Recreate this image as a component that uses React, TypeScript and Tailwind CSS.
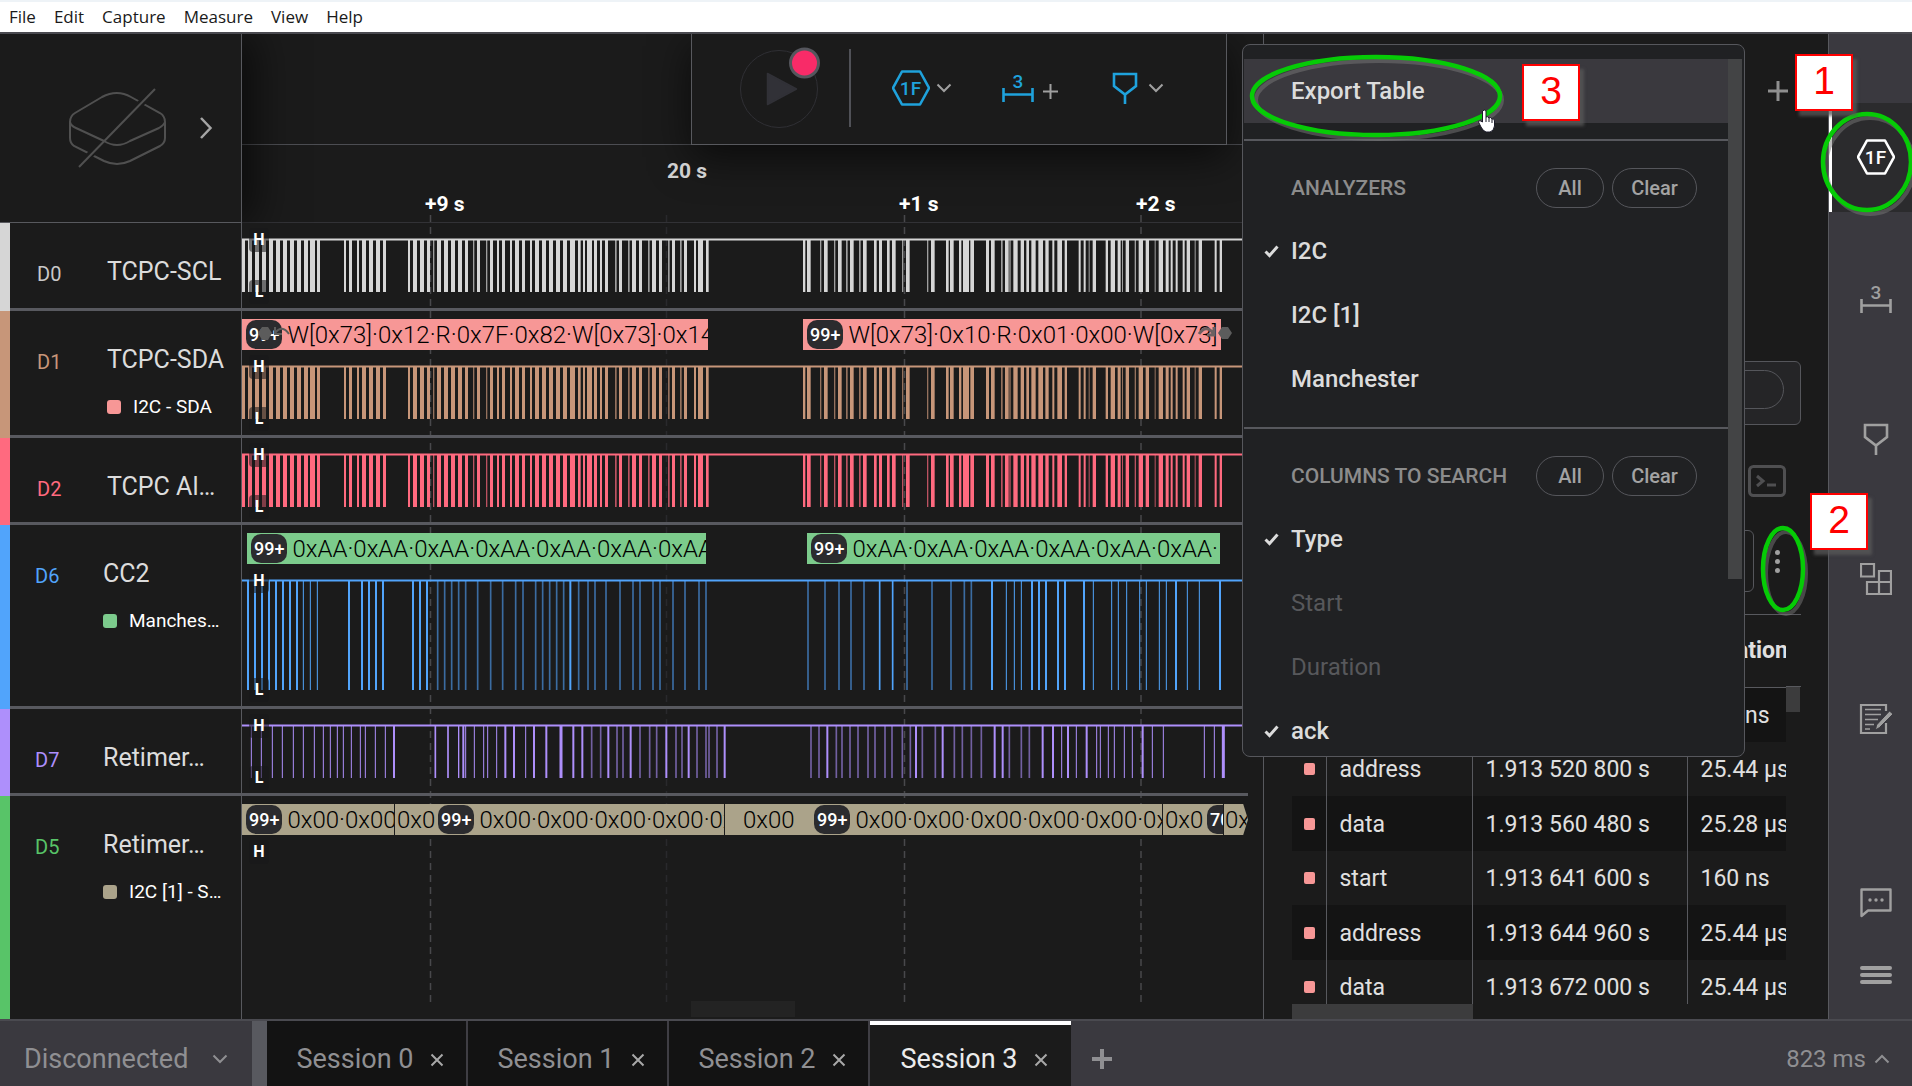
import React from "react";

type Pulse = [center: number, width: number, opacity?: number];

const fromSpans = (offset: number, spans: string): Pulse[] =>
  spans.split(" ").map((s) => {
    const [x, w] = s.split(",").map(Number);
    return [offset + (x + w / 2) / 3, w / 3, w < 6 ? 0.7 : 1];
  });

const fromCenters = (offset: number, marks: string): Pulse[] =>
  marks.split(" ").map((s) => {
    const dim = s.endsWith("d");
    const [x, w] = s.replace("d", "").split(",").map(Number);
    return [offset + x / 3, (w || (dim ? 5 : 3)) / 3, dim ? 0.6 : 1];
  });

const CLOCK: Pulse[] = [
  ...fromSpans(
    -2,
    "6,9 24,12 45,12 66,12 87,12 108,12 129,12 150,12 171,12 192,12 210,15 231,9 312,6 327,9 351,6 366,12 387,12 408,12 429,9 504,6 519,12 540,12 561,9 579,4 591,12 612,12 633,12 654,12 675,9 699,4 711,9 738,4 750,9 771,6 786,9 810,6 825,12 846,9 870,6 885,12 906,12 927,12 948,12 969,12 990,15 1014,8 1029,6 1041,15 1062,9 1080,6 1095,9 1125,5 1137,9 1164,5 1176,12 1197,9 1224,5 1236,12 1257,9 1284,5 1296,9 1320,5 1332,9 1362,6 1374,15 1398,8"
  ),
  ...fromSpans(
    498,
    "189,7 201,11 240,4 252,11 282,4 294,11 318,5 330,11 357,5 369,11 402,8 417,9 441,8 456,11 486,4 498,11 561,4 573,11 618,8 630,11 657,7 669,18 691,11 738,9 753,11 783,5 795,11 808,4 820,13 842,10 859,8 874,13 895,14 916,10 937,6 952,14 974,7 1016,6 1031,6 1046,3 1058,10 1097,7 1112,13 1133,9 1146,3 1157,10 1184,4 1196,13 1217,10 1244,3 1256,13 1277,9 1292,6 1307,6 1328,6 1340,10 1364,3 1376,10 1424,6 1439,7"
  ),
];

const CC: Pulse[] = [
  ...fromCenters(
    -2,
    "24,6 45,6 66,6 87,6 108,6 129,6 150,6 171,6 190 211 232 327,6 366,6 387,6 408,6 429,6 519,6 540,6 561,6 593d 614d 635d 656d 677d 713d 752d 788d 827d 849d 887d 908d 929d 950d 971d 991,6 1016d 1044d 1065d 1098d 1140d 1179d 1200d 1239d 1260d 1299d 1335d 1377d 1398d"
  ),
  ...fromCenters(
    498,
    "204d 255d 297d 333d 372d 419,5 458,5 501d 576d 633d 673d 694d 756,6 799 823 844 876,6 897,6 918,6 954,6 975,6 1032,6 1060 1115 1135 1160 1199 1219 1258 1279 1308,6 1342 1378 1440,6"
  ),
];

const RETIMER: Pulse[] = [
  ...fromCenters(
    -2,
    "34 64 97 127 160 190 223 250 271 292 310 334 361 376 406 436 462,6 586,5 624,5 656,4 670,6 677 703 731 743 770 796,6 822,6 857 882,6 919,6 963,9 1000,6 1027,6 1055d 1082d 1105,6 1131d 1149d 1172,6 1200d 1229d 1250d 1279,6 1308d 1326d 1346,6 1371d 1398d 1407d 1431d 1454,6"
  ),
  ...fromCenters(
    498,
    "213d 237d 262,6 289d 306d 330d 354d 384d 405d 435d 456d 487d 511d 528,6 547d 586d 608,6 643d 667d 694d 724d 764,6 788,6 808d 844d 868d 908,6 939,6 965 984,6 1009 1040,6 1070 1081 1105 1123 1153 1177 1208,6 1237 1270 1393 1423 1450,9"
  ),
];

function Wave({ pulses, color, bottom }: { pulses: Pulse[]; color: string; bottom: number }) {
  return (
    <svg width="100%" height={bottom + 1} className="block" aria-hidden="true">
      <rect x="0" y="15" width="100%" height="3" fill={color} opacity="0.5" />
      <rect x="0" y="16" width="100%" height="1" fill={color} />
      {pulses.map(([x, w, o], i) => (
        <rect key={i} x={x - w / 2} y="17" width={w} height={bottom - 17} fill={color} opacity={o} />
      ))}
    </svg>
  );
}

function Level({ children, className }: { children: string; className: string }) {
  return (
    <span
      className={`absolute left-[7px] flex h-6 w-5 items-center justify-center rounded bg-[#17171a]/55 text-base font-bold text-white ${className}`}
    >
      {children}
    </span>
  );
}

function Badge({ children }: { children: string }) {
  return (
    <span className="flex h-[29px] shrink-0 items-center justify-center rounded-[10px] bg-[#2b2b2e] px-[3px] text-lg font-medium text-white">
      {children}
    </span>
  );
}

function Bubble({ className, badge, children }: { className: string; badge?: string; children?: string }) {
  return (
    <div
      className={`flex h-[31px] shrink-0 items-center gap-[5px] overflow-hidden whitespace-nowrap text-2xl font-light text-black ${className}`}
    >
      {badge && <Badge>{badge}</Badge>}
      {children && <span>{children}</span>}
    </div>
  );
}

function Channel(props: {
  id: string;
  name: string;
  strip: string;
  idColor: string;
  height: string;
  sub?: string;
  subColor?: string;
  narrow?: boolean;
  bubbles?: React.ReactNode;
  wave?: React.ReactNode;
}) {
  const { id, name, strip, idColor, height, sub, subColor, narrow, bubbles, wave } = props;
  return (
    <section className={`flex ${height}`}>
      <div className="flex w-[242px] shrink-0 border-r border-[#58595e]">
        <div className={`w-[10px] shrink-0 ${strip}`} />
        <div className={`min-w-0 flex-1 pt-8 ${narrow ? "pl-[25px]" : "pl-[27px]"} border-b-[3px] border-[#58595f]`}>
          <div className="flex items-center">
            <span className={`shrink-0 pt-[5px] text-xl ${idColor} ${narrow ? "w-[68px]" : "w-[70px]"}`}>{id}</span>
            <span className="text-[25px] leading-8 whitespace-nowrap text-[#dcdcdc]">{name}</span>
          </div>
          {sub && (
            <div className={`flex items-center gap-3 pt-[17px] ${narrow ? "pl-[68px]" : "pl-[70px]"}`}>
              <span className={`size-[14px] shrink-0 rounded-[3px] ${subColor}`} />
              <span className="text-[19px] leading-7 whitespace-nowrap text-white">{sub}</span>
            </div>
          )}
        </div>
      </div>
      <div className="relative min-w-0 flex-1 overflow-hidden border-b-[3px] border-[#58595f]">
        {bubbles && <div className="relative flex pt-2">{bubbles}</div>}
        <div className="relative">{wave}</div>
      </div>
    </section>
  );
}

function Hexagon({ className }: { className?: string }) {
  return (
    <svg width="38" height="36" viewBox="0 0 38 36" className={className} aria-hidden="true">
      <path d="M10 1.500H28L37 18L28 34.500H10L1 18Z" fill="none" stroke="currentColor" strokeWidth="2.600" strokeLinejoin="round" />
      <text x="18.500" y="24.500" textAnchor="middle" fontFamily="Roboto" fontWeight="500" fontSize="19" fill="currentColor">
        1F
      </text>
    </svg>
  );
}

function Ruler() {
  return (
    <svg width="32" height="30" viewBox="0 0 32 30" aria-hidden="true">
      <text x="16" y="14.500" textAnchor="middle" fontFamily="Roboto" fontWeight="500" fontSize="19" fill="currentColor">
        3
      </text>
      <path d="M1.500 15V29M30.500 15V29M1.500 21.500H30.500" fill="none" stroke="currentColor" strokeWidth="2.600" />
    </svg>
  );
}

function Marker() {
  return (
    <svg width="26" height="32" viewBox="0 0 26 32" aria-hidden="true">
      <path d="M2 2H24V14L13 22.500L2 14ZM13 22V32" fill="none" stroke="currentColor" strokeWidth="2.600" />
    </svg>
  );
}

function Chevron({ className = "" }: { className?: string }) {
  return (
    <svg width="16" height="10" viewBox="0 0 16 10" className={className} aria-hidden="true">
      <path d="M1.500 1.500L8 8L14.500 1.500" fill="none" stroke="currentColor" strokeWidth="2" />
    </svg>
  );
}

function Plus({ size, weight }: { size: number; weight: number }) {
  return (
    <svg width={size} height={size} viewBox="0 0 20 20" aria-hidden="true">
      <path d="M10 0V20M0 10H20" stroke="currentColor" strokeWidth={(weight * 20) / size} />
    </svg>
  );
}

function Toolbar() {
  return (
    <div className="absolute top-0 left-[449px] z-10 flex h-[111px] w-[536px] items-center border border-t-0 border-[#58595e] bg-[#1b1b1b] pb-[2px] shadow-[0_12px_40px_rgba(0,0,0,0.6)]">
      <button aria-label="Start capture" className="ml-[47px] shrink-0 pb-[3px]">
        <svg width="82" height="84" viewBox="0 0 82 84" className="block">
          <circle cx="40" cy="44" r="38.500" fill="none" stroke="#2f2f34" />
          <path d="M28.500 28.500L57.500 44L28.500 59.500Z" fill="#313137" stroke="#313137" strokeWidth="1.500" strokeLinejoin="round" />
          <circle cx="65.500" cy="18" r="14" fill="#f82b68" stroke="#55565d" strokeWidth="3" />
        </svg>
      </button>
      <div className="ml-7 h-[78px] w-[2px] bg-[#505157]" />
      <button aria-label="Analyzers" className="ml-[41px] flex items-center gap-[6px] text-[#1fa2dc]">
        <Hexagon />
        <span className="text-[#a0a0a0]"><Chevron /></span>
      </button>
      <button aria-label="Measurements" className="ml-[50px] flex items-end gap-[9px] text-[#1fa2dc]">
        <Ruler />
        <span className="pb-1 text-[#a0a0a0]"><Plus size={15} weight={2} /></span>
      </button>
      <button aria-label="Markers" className="ml-[54px] flex items-center gap-[10px] text-[#1fa2dc]">
        <Marker />
        <span className="text-[#a0a0a0]"><Chevron /></span>
      </button>
    </div>
  );
}

function DeviceHeader() {
  return (
    <div className="relative z-10 flex w-[242px] shrink-0 items-center border-r border-b border-[#58595e] bg-[#1b1b1b] shadow-[12px_0_40px_rgba(0,0,0,0.6)]">
      <svg width="98" height="80" viewBox="0 0 98 80" className="ml-[68px] shrink-0" aria-label="No device" role="img">
        <g fill="none" stroke="#505050" strokeWidth="2">
          <path d="M34 9Q49 1 63 9L92 25Q97 28 97 34V50Q97 55 92 58L62 73Q49 79 36 73L6 58Q2 55 2 50V34Q2 28 7 25Z" />
          <path d="M2 34Q3 38 8 40L36 53Q49 61 62 53L91 40Q96 37 97 34" />
          <path d="M20 69L80 8" stroke="#1b1b1b" strokeWidth="7" strokeDasharray="16 52 20" />
          <path d="M11 79L87 1" />
        </g>
      </svg>
      <svg width="14" height="24" viewBox="0 0 14 24" className="ml-[33px]" aria-hidden="true">
        <path d="M2 2L11.500 12L2 22" fill="none" stroke="#a5a5a5" strokeWidth="2.500" />
      </svg>
    </div>
  );
}

function MenuOption({ label, on, dim }: { label: string; on?: boolean; dim?: boolean }) {
  return (
    <button
      role="menuitemcheckbox"
      aria-checked={!!on}
      className={`flex h-16 shrink-0 items-center text-2xl ${dim ? "text-[#57585b]" : "font-medium text-[#dcdcdc]"}`}
    >
      <span className="flex w-[47px] justify-end pr-3">
        {on && (
          <svg width="15" height="13" viewBox="0 0 15 13" aria-hidden="true">
            <path d="M1.500 6.500L5.500 10.500L13.500 1.500" fill="none" stroke="currentColor" strokeWidth="3" />
          </svg>
        )}
      </span>
      {label}
    </button>
  );
}

function MenuHeading({ label }: { label: string }) {
  const pill = "h-10 rounded-full border border-[#55565b] text-xl font-medium text-[#a3a3a3]";
  return (
    <div className="flex h-20 shrink-0 items-center border-t-2 border-[#57585d] pt-4 pr-[31px] pl-[47px]">
      <h2 className="flex-1 text-[21px] leading-6 font-medium text-[#8c8c8c]">{label}</h2>
      <button className={`${pill} w-[68px]`}>All</button>
      <button className={`${pill} ml-2 w-[85px]`}>Clear</button>
    </div>
  );
}

function SearchMenu() {
  return (
    <div
      role="menu"
      className="absolute top-[44px] right-[167px] z-20 flex h-[713px] w-[503px] overflow-hidden rounded-lg border border-[#56575c] bg-[#202123] px-px pt-[14px]"
    >
      <div className="flex min-w-0 flex-1 flex-col">
        <button role="menuitem" className="mb-4 flex h-16 shrink-0 items-center bg-[#3a393e] pl-[47px] text-2xl font-medium text-[#dcdcdc]">
          Export Table
        </button>
        <MenuHeading label="ANALYZERS" />
        <div className="flex shrink-0 flex-col pb-4">
          <MenuOption label="I2C" on />
          <MenuOption label="I2C [1]" />
          <MenuOption label="Manchester" />
        </div>
        <MenuHeading label="COLUMNS TO SEARCH" />
        <div className="flex shrink-0 flex-col">
          <MenuOption label="Type" on />
          <MenuOption label="Start" dim />
          <MenuOption label="Duration" dim />
          <MenuOption label="ack" on />
        </div>
      </div>
      <div className="mr-px h-[520px] w-[14px] shrink-0 bg-[#434445]" />
    </div>
  );
}

const ROWS = [
  ["start", "1.913 517 440 s", "160 ns"],
  ["address", "1.913 520 800 s", "25.44 µs"],
  ["data", "1.913 560 480 s", "25.28 µs"],
  ["start", "1.913 641 600 s", "160 ns"],
  ["address", "1.913 644 960 s", "25.44 µs"],
  ["data", "1.913 672 000 s", "25.44 µs"],
];

function AnalyzerPanel() {
  return (
    <aside className="flex w-[565px] shrink-0 flex-col border-l border-[#58595e] pr-[27px] pl-7">
      <div className="flex h-[113px] items-center justify-end pr-[13px] text-[#8f8f8f]">
        <button aria-label="Add analyzer"><Plus size={20} weight={3} /></button>
      </div>
      <div className="mt-[214px] flex h-[64px] shrink-0 items-start justify-end rounded-md border border-[#55565b] bg-[#252527] pt-2 pr-4">
        <button aria-label="Trigger view" className="h-[39px] w-[70px] rounded-full border border-[#55565b]" />
      </div>
      <div className="mt-10 flex shrink-0 justify-end pr-[15px] text-[#4f4f51]">
        <button aria-label="Terminal">
          <svg width="38" height="32" viewBox="0 0 38 32" className="block">
            <rect x="1.500" y="1.500" width="35" height="29" rx="4" fill="none" stroke="currentColor" strokeWidth="3" />
            <path d="M9 11L15 16L9 21M19 20H28" fill="none" stroke="currentColor" strokeWidth="3" />
          </svg>
        </button>
      </div>
      <div className="mt-[33px] flex shrink-0 items-center">
        <input aria-label="Search" className="h-[62px] w-[462px] rounded-md border border-[#55565b] bg-transparent" />
        <button aria-label="Table options" className="flex flex-1 flex-col items-center gap-1">
          <span className="size-[5px] rounded-full bg-[#a0a0a0]" />
          <span className="size-[5px] rounded-full bg-[#a0a0a0]" />
          <span className="size-[5px] rounded-full bg-[#a0a0a0]" />
        </button>
      </div>
      <div className="mt-[22px] flex min-h-0 flex-1 flex-col border-t border-[#58595e]">
        <div className="flex min-h-0 flex-1 overflow-hidden">
          <div className="min-w-0 flex-1 overflow-hidden">
            <table className="w-[520px] table-fixed border-collapse text-left text-[#e0e0e0]">
              <colgroup>
                <col className="w-[34px]" />
                <col className="w-[146px]" />
                <col className="w-[215px]" />
                <col />
              </colgroup>
              <thead>
                <tr className="h-[72px] border-b border-[#58595e] text-[23px]">
                  <th aria-label="Analyzer" />
                  <th className="pl-[13px] font-bold">Type</th>
                  <th className="pl-[13px] font-bold">Start</th>
                  <th className="pl-[13px] font-bold">Duration</th>
                </tr>
              </thead>
              <tbody className="text-[23px] leading-7">
                {ROWS.map(([type, start, duration]) => (
                  <tr key={type + start} className="odd:h-[55px] odd:bg-[#141414] even:h-[54px]">
                    <td className="pl-3">
                      <div className="h-3 w-[11px] rounded-[2px] bg-[#f79796]" />
                    </td>
                    <td className="border-l border-[#58595e] pt-[2px] pl-[13px]">{type}</td>
                    <td className="border-l border-[#58595e] pt-[2px] pl-[13px]">{start}</td>
                    <td className="border-l border-[#58595e] pt-[2px] pl-[13px] whitespace-nowrap">{duration}</td>
                  </tr>
                ))}
              </tbody>
            </table>
          </div>
          <div className="mt-[71px] w-[15px] shrink-0 border-t border-[#58595e]">
            <div className="h-[25px] w-[14px] bg-[#3c3c3d]" />
          </div>
        </div>
        <div className="h-[15px] shrink-0">
          <div className="h-full w-[181px] bg-[#3c3c3d]" />
        </div>
      </div>
    </aside>
  );
}

function Sidebar() {
  const slot = "flex h-[140px] w-full shrink-0 items-center justify-center pl-[10px]";
  return (
    <nav className="flex w-[84px] shrink-0 flex-col border-l border-[#58595e] bg-[#3a393f] text-[#a0a0a0]">
      <button
        aria-label="Analyzers"
        className="mt-[69px] mb-[17px] flex h-[109px] shrink-0 items-center justify-center border-l-[3px] border-white bg-[#2b2b2d] pb-px pl-[7px] text-white"
      >
        <Hexagon />
      </button>
      <button aria-label="Measurements" className={slot}><Ruler /></button>
      <button aria-label="Markers" className={slot}><Marker /></button>
      <button aria-label="Extensions" className={slot}>
        <svg width="32" height="32" viewBox="0 0 32 32">
          <path d="M1 1H14V13.500H1ZM19 31V8H31V31H7V19H31" fill="none" stroke="currentColor" strokeWidth="2.200" />
        </svg>
      </button>
      <button aria-label="Notes" className={slot}>
        <svg width="34" height="32" viewBox="0 0 34 32">
          <g fill="none" stroke="currentColor">
            <path d="M27 8V2H2V30H27V20" strokeWidth="2.200" />
            <path d="M6 6.500H22M6 11.500H22M6 16.500H19M6 21.500H15M6 26H11" strokeWidth="1.600" />
          </g>
          <path d="M30.500 8L34 11L20.500 24.500L16.500 27L17.500 22Z" fill="currentColor" stroke="#3a393f" />
        </svg>
      </button>
      <div className="flex-1" />
      <button aria-label="Feedback" className="flex h-[72px] shrink-0 items-center justify-center pl-[10px]">
        <svg width="32" height="30" viewBox="0 0 32 30">
          <path d="M1.500 1.500H30.500V22.500H8L1.500 28Z" fill="none" stroke="currentColor" strokeWidth="2.400" strokeLinejoin="round" />
          <circle cx="10" cy="12" r="1.700" fill="currentColor" />
          <circle cx="16" cy="12" r="1.700" fill="currentColor" />
          <circle cx="22" cy="12" r="1.700" fill="currentColor" />
        </svg>
      </button>
      <button aria-label="Menu" className="mb-2 flex h-[72px] shrink-0 flex-col items-center justify-center gap-[3px] pl-[10px]">
        <span className="h-1 w-8 rounded bg-[#a0a0a0]" />
        <span className="h-1 w-8 rounded bg-[#a0a0a0]" />
        <span className="h-1 w-8 rounded bg-[#a0a0a0]" />
      </button>
    </nav>
  );
}

function Callout({ children, className }: { children: string; className: string }) {
  return (
    <div
      className={`absolute z-40 flex h-[57px] w-[58px] items-center justify-center border-2 border-[#ff0000] bg-white pb-1 font-['Liberation_Sans',sans-serif] text-[39px] leading-none text-[#ff0000] shadow-[4px_5px_3px_rgba(90,90,90,0.75)] ${className}`}
    >
      {children}
    </div>
  );
}

function Annotations() {
  return (
    <>
      <svg width="700" height="640" viewBox="1212 0 700 640" className="pointer-events-none absolute top-0 right-0 z-30" aria-hidden="true">
        <g fill="none" stroke="#777" strokeWidth="4" opacity="0.5" transform="translate(3 4)">
          <ellipse cx="1376" cy="96" rx="123" ry="39" />
          <ellipse cx="1867" cy="162" rx="44" ry="48" />
          <ellipse cx="1783" cy="569" rx="20" ry="41" />
        </g>
        <g fill="none" stroke="#06cb06" strokeWidth="4.500">
          <ellipse cx="1376" cy="96" rx="124" ry="39" />
          <ellipse cx="1867" cy="162" rx="44" ry="48" />
          <ellipse cx="1783" cy="569" rx="20" ry="41" />
        </g>
        <path
          d="M1482.500 111Q1484.500 109 1486 111V117Q1488 116 1489 118Q1491 116.500 1492 119Q1494.500 118 1494.500 121V126Q1494 131 1490 132H1486Q1483 131 1481 127L1478.500 122Q1479 119.500 1482.500 122Z"
          fill="#fff"
          stroke="#1a1a28"
        />
        <path d="M1486 117V122M1489 118V122M1492 119V123" stroke="#1a1a28" />
      </svg>
      <Callout className="top-[64px] right-[332px]">3</Callout>
      <Callout className="top-[54px] right-[59px]">1</Callout>
      <Callout className="top-[493px] right-[44px]">2</Callout>
    </>
  );
}

function Gridlines() {
  return (
    <svg className="pointer-events-none absolute top-[181px] left-[242px] h-[788px] w-[1006px]" aria-hidden="true">
      <g strokeWidth="1.500" strokeDasharray="7 5" fill="none">
        <path d="M188.500 0V788M662.500 0V788M899 0V788" stroke="#48484b" />
        <path d="M424.500 0V788" stroke="#29292c" />
      </g>
    </svg>
  );
}

function Timeline() {
  const time = "absolute text-[21px] leading-6 font-bold whitespace-nowrap";
  return (
    <main className="relative flex min-w-0 flex-1 flex-col overflow-hidden">
      <Gridlines />
      <div className="flex h-[189px] shrink-0 overflow-hidden">
        <DeviceHeader />
        <div className="relative flex-1 border-b border-[#323236]">
          <div className="h-[111px] border-b border-[#4c4d52]" />
          <Toolbar />
          <span className={`${time} top-[125px] left-[425px] z-10 text-[#d0d0d0]`}>20 s</span>
          <span className={`${time} top-[158px] left-[183px] z-10 text-white`}>+9 s</span>
          <span className={`${time} top-[158px] left-[657px] z-10 text-white`}>+1 s</span>
          <span className={`${time} top-[158px] left-[894px] z-10 text-white`}>+2 s</span>
        </div>
      </div>
      <div className="flex min-h-0 flex-1 flex-col pr-[15px]">
        <Channel
          id="D0" name="TCPC-SCL" strip="bg-[#d6d6d6]" idColor="text-[#c9c9c9]" height="h-[88px]"
          wave={<><Wave pulses={CLOCK} color="#d6d6d6" bottom={69} /><Level className="top-[5px]">H</Level><Level className="top-[57px]">L</Level></>}
        />
        <Channel
          id="D1" name="TCPC-SDA" strip="bg-[#c79679]" idColor="text-[#c79679]" height="h-[127px]"
          sub="I2C - SDA" subColor="bg-[#f79796]"
          bubbles={
            <>
              <Bubble badge="99+" className="w-[466px] bg-[#f79796] pl-1">W[0x73]·0x12·R·0x7F·0x82·W[0x73]·0x14</Bubble>
              <Bubble badge="99+" className="ml-[95px] w-[418px] bg-[#f79796] pl-1">W[0x73]·0x10·R·0x01·0x00·W[0x73]·</Bubble>
              <svg className="absolute top-[15px] left-[16px]" width="36" height="16" aria-hidden="true">
                <path d="M4 1H10L14 7L10 14H4L0 7Z" fill="#5c5c5c" />
                <path d="M31 8Q24 -2 17 7M17 1V8H24" fill="none" stroke="#5c5c5c" strokeWidth="2" />
              </svg>
              <svg className="absolute top-[14px] left-[955px]" width="36" height="16" aria-hidden="true">
                <path d="M25 2H31L35 8L31 14H25L21 8Z" fill="#5c5c5c" />
                <path d="M2 9Q9 -1 16 8M17 2V10H10" fill="none" stroke="#6e6060" strokeWidth="3" />
              </svg>
            </>
          }
          wave={<><Wave pulses={CLOCK} color="#c79679" bottom={69} /><Level className="top-[5px]">H</Level><Level className="top-[57px]">L</Level></>}
        />
        <Channel
          id="D2" name="TCPC Al…" strip="bg-[#ff6a7f]" idColor="text-[#ff6a7f]" height="h-[87px]"
          wave={<><Wave pulses={CLOCK} color="#ff6a7f" bottom={69} /><Level className="top-[5px]">H</Level><Level className="top-[57px]">L</Level></>}
        />
        <Channel
          id="D6" name="CC2" strip="bg-[#51a4fb]" idColor="text-[#51a4fb]" height="h-[184px]" narrow
          sub="Manches…" subColor="bg-[#7ccb8c]"
          bubbles={
            <>
              <Bubble badge="99+" className="ml-[5px] w-[459px] bg-[#7ccb8c] pl-1">0xAA·0xAA·0xAA·0xAA·0xAA·0xAA·0xAA</Bubble>
              <Bubble badge="99+" className="ml-[101px] w-[413px] bg-[#7ccb8c] pl-1">0xAA·0xAA·0xAA·0xAA·0xAA·0xAA·</Bubble>
            </>
          }
          wave={<><Wave pulses={CC} color="#51a4fb" bottom={126} /><Level className="top-[5px]">H</Level><Level className="top-[114px]">L</Level></>}
        />
        <Channel
          id="D7" name="Retimer…" strip="bg-[#ae8ffb]" idColor="text-[#ae8ffb]" height="h-[87px]" narrow
          wave={<><Wave pulses={RETIMER} color="#ae8ffb" bottom={69} /><Level className="top-[5px]">H</Level><Level className="top-[57px]">L</Level></>}
        />
        <div className="-mb-[3px] flex min-h-0 flex-1 flex-col overflow-hidden">
          <Channel
            id="D5" name="Retimer…" strip="bg-[#58c468]" idColor="text-[#58c468]" height="h-full" narrow
            sub="I2C [1] - S…" subColor="bg-[#aba38a]"
            bubbles={
              <>
                <Bubble badge="99+" className="w-[153px] border-r border-[#1b1b1b] bg-[#aba38a] pl-1">0x00·0x00</Bubble>
                <Bubble className="w-[42px] bg-[#aba38a] pl-[2px]">0x0</Bubble>
                <Bubble badge="99+" className="w-[288px] border-r border-[#1b1b1b] bg-[#aba38a] pl-px">0x00·0x00·0x00·0x00·0x00</Bubble>
                <Bubble className="w-[88px] bg-[#aba38a] pl-[18px]">0x00</Bubble>
                <Bubble badge="99+" className="w-[350px] border-r border-[#1b1b1b] bg-[#aba38a] pl-px">0x00·0x00·0x00·0x00·0x00·0x00</Bubble>
                <Bubble className="w-[44px] bg-[#aba38a] pl-[2px]">0x0</Bubble>
                <Bubble badge="70" className="w-[17px] border-r border-[#1b1b1b] bg-[#aba38a]" />
                <Bubble className="w-[24px] bg-[#aba38a] pl-px [clip-path:polygon(0_0,80%_0,100%_50%,80%_100%,0_100%)]">0x</Bubble>
              </>
            }
            wave={<Level className="top-[5px]">H</Level>}
          />
        </div>
      </div>
      <div className="absolute bottom-[2px] left-[691px] h-4 w-[104px] bg-[#232323]" />
    </main>
  );
}

function CloseMark() {
  return (
    <svg width="14" height="14" viewBox="0 0 14 14" aria-hidden="true">
      <path d="M1.500 1.500L12.500 12.500M12.500 1.500L1.500 12.500" stroke="#a8a8a8" strokeWidth="2" />
    </svg>
  );
}

function StatusBar() {
  const tab = "flex w-[201px] items-center justify-center gap-[17px] pl-2 text-[27px] leading-8";
  return (
    <footer className="flex h-[67px] shrink-0 border-t-2 border-[#4a4a50] bg-[#3a393f]">
      <button className="flex w-[252px] items-center gap-6 pt-[11px] pl-6 text-[27px] leading-8 text-[#8f8f92]">
        Disconnected <Chevron />
      </button>
      <div className="w-[15px] bg-[#58595f]" />
      {["Session 0", "Session 1", "Session 2", "Session 3"].map((s) => (
        <div
          key={s}
          className={
            s === "Session 3"
              ? `${tab} border-t-4 border-white bg-[#1b1b1b] pt-[7px] text-[#ececec]`
              : `${tab} border-r-2 border-[#3f3e44] bg-[#131313] pt-[11px] text-[#8f8f92]`
          }
        >
          <button>{s}</button>
          <button aria-label={`Close ${s}`} className="pt-px"><CloseMark /></button>
        </div>
      ))}
      <button aria-label="New session" className="px-[21px] pt-[11px] text-[#8f8f92]">
        <Plus size={20} weight={4} />
      </button>
      <div className="flex-1" />
      <button className="flex items-center gap-2 pt-[11px] pr-[22px] text-2xl text-[#8f8f92]">
        823 ms <Chevron className="rotate-180" />
      </button>
    </footer>
  );
}

export default function App() {
  return (
    <div className="relative flex h-screen flex-col overflow-hidden bg-[#1b1b1b] font-[Roboto,sans-serif]">
      <header className="h-[34px] shrink-0 border-t-2 border-b-2 border-t-[#eef3f7] border-b-[#4a4a50] bg-white font-['Open_Sans',sans-serif] text-[17px] text-[#1a1a1a]">
        <nav className="flex h-full items-center gap-[18px] pl-[9px]">
          {["File", "Edit", "Capture", "Measure", "View", "Help"].map((m) => (
            <button key={m}>{m}</button>
          ))}
        </nav>
      </header>
      <div className="flex min-h-0 flex-1">
        <Timeline />
        <AnalyzerPanel />
        <Sidebar />
      </div>
      <StatusBar />
      <SearchMenu />
      <Annotations />
    </div>
  );
}
